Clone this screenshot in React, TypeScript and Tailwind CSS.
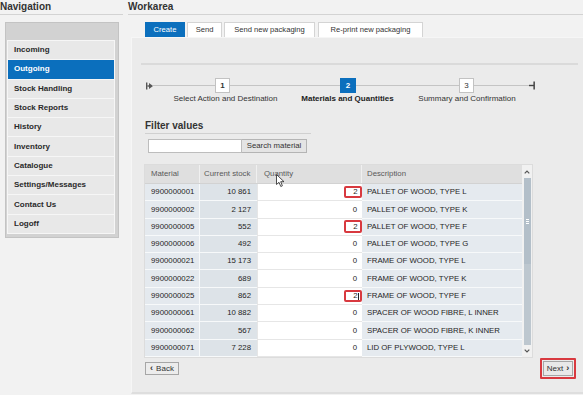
import React from "react";

const navItems = [
  "Incoming",
  "Outgoing",
  "Stock Handling",
  "Stock Reports",
  "History",
  "Inventory",
  "Catalogue",
  "Settings/Messages",
  "Contact Us",
  "Logoff",
];

type Row = { m: string; s: string; q: string; d: string; hl?: boolean; caret?: boolean };

const rows: Row[] = [
  { m: "9900000001", s: "10 861", q: "2", d: "PALLET OF WOOD, TYPE L", hl: true },
  { m: "9900000002", s: "2 127", q: "0", d: "PALLET OF WOOD, TYPE K" },
  { m: "9900000005", s: "552", q: "2", d: "PALLET OF WOOD, TYPE F", hl: true },
  { m: "9900000006", s: "492", q: "0", d: "PALLET OF WOOD, TYPE G" },
  { m: "9900000021", s: "15 173", q: "0", d: "FRAME OF WOOD, TYPE L" },
  { m: "9900000022", s: "689", q: "0", d: "FRAME OF WOOD, TYPE K" },
  { m: "9900000025", s: "862", q: "2", d: "FRAME OF WOOD, TYPE F", hl: true, caret: true },
  { m: "9900000061", s: "10 882", q: "0", d: "SPACER OF WOOD FIBRE, L INNER" },
  { m: "9900000062", s: "567", q: "0", d: "SPACER OF WOOD FIBRE, K INNER" },
  { m: "9900000071", s: "7 228", q: "0", d: "LID OF PLYWOOD, TYPE L" },
];

function StepBox({ n, active, bold }: { n: string; active?: boolean; bold?: boolean }) {
  return (
    <div
      className={
        active
          ? "w-[16px] h-[15px] shrink-0 bg-[#0b6fbd] text-white text-[8px] font-bold flex items-center justify-center leading-none"
          : `w-[15px] h-[15px] shrink-0 bg-white border border-[#c2c2c2] text-[#333] text-[8px] ${bold ? "font-bold" : ""} flex items-center justify-center leading-none`
      }
    >
      {n}
    </div>
  );
}

export default function App() {
  return (
    <div className="w-[583px] h-[395px] overflow-hidden bg-[#f2f2f2] flex font-['Liberation_Sans',Arial,sans-serif] text-[#333]">
      {/* Navigation column */}
      <div className="w-[123px] shrink-0 mr-[5px]">
        <div className="h-[15px] border-b border-[#d3d3d3] text-[10px] font-bold leading-[13px] text-[#333]">
          Navigation
        </div>
        <div className="mt-[7px] ml-[5px] w-[114px] bg-[#d2d2d2] border border-[#c3c3c3] pt-[17px] pl-[1px] pr-[3px] pb-[3px]">
          <div className="border border-[#f6f6f6] border-b-0">
            {navItems.map((it) => (
              <div
                key={it}
                className={
                  it === "Outgoing"
                    ? "h-[19.3px] bg-[#0b6fbd] text-white border-b border-[#f6f6f6] pl-[6px] text-[8px] font-bold flex items-center"
                    : "h-[19.3px] bg-[#e8e8e8] text-[#2a2a2a] border-b border-[#f6f6f6] pl-[6px] text-[8px] font-bold flex items-center"
                }
              >
                {it}
              </div>
            ))}
          </div>
        </div>
      </div>

      {/* Workarea column */}
      <div className="flex-1 flex flex-col">
        <div className="h-[15px] border-b border-[#d3d3d3] text-[10px] font-bold leading-[13px] text-[#333]">
          Workarea
        </div>
        <div className="mt-[7px] ml-[17px] flex items-end h-[15px] text-[7.6px] text-[#333]">
          <div className="w-[40px] h-[15px] bg-[#0b6fbd] text-white flex items-center justify-center">Create</div>
          <div className="ml-[2px] w-[35px] h-[15px] bg-white border border-b-0 border-[#d4d4d4] flex items-center justify-center">Send</div>
          <div className="ml-[2px] w-[91px] h-[15px] bg-white border border-b-0 border-[#d4d4d4] flex items-center justify-center">Send new packaging</div>
          <div className="ml-[3px] w-[105px] h-[15px] bg-white border border-b-0 border-[#d4d4d4] flex items-center justify-center">Re-print new packaging</div>
        </div>

        {/* Panel */}
        <div className="ml-[3px] h-[357px] bg-[#ebebeb] border-t border-l border-[#f6f6f6] border-b-2 border-b-[#dedede] flex flex-col">
          <div className="mt-[25px] ml-[9px] mr-[5px] h-[2px] bg-[#dadada]" />

          {/* Stepper */}
          <div className="mt-[13px] ml-[14px] h-[15px] flex items-center">
            <svg width="7" height="8" viewBox="0 0 7 8" className="shrink-0">
              <rect x="0" y="0.5" width="1.4" height="7" fill="#555" />
              <rect x="1.4" y="3.3" width="2" height="1.4" fill="#555" />
              <polygon points="3,1 7,4 3,7" fill="#555" />
            </svg>
            <div className="w-[62px] h-px bg-[#c4c4c4]" />
            <StepBox n="1" bold />
            <div className="w-[110px] h-px bg-[#c4c4c4]" />
            <StepBox n="2" active />
            <div className="w-[103px] h-px bg-[#c4c4c4]" />
            <StepBox n="3" />
            <div className="w-[55px] h-px bg-[#c4c4c4]" />
            <svg width="6" height="9" viewBox="0 0 6 9" className="shrink-0">
              <rect x="0" y="3.8" width="5" height="1.4" fill="#444" />
              <rect x="4.4" y="0.5" width="1.5" height="8" fill="#444" />
            </svg>
          </div>
          <div className="mt-[1px] ml-[33px] h-[10px] flex text-[8px] leading-[10px]">
            <div className="w-[121px] text-center text-[#333]">Select Action and Destination</div>
            <div className="w-[123px] text-center font-bold text-[#222]">Materials and Quantities</div>
            <div className="w-[116px] text-center text-[#333]">Summary and Confirmation</div>
          </div>

          {/* Filter values */}
          <div className="mt-[15px] ml-[13px] w-[166px] h-[15px] border-b border-[#d0d0d0] text-[10px] font-bold leading-[13px] text-[#333]">
            Filter values
          </div>
          <div className="mt-[5px] ml-[16px] flex h-[14px]">
            <div className="w-[94px] h-[14px] bg-white border border-[#bdbdbd]" />
            <div className="w-[65px] h-[14px] bg-[#e4e4e4] border border-l-0 border-[#b4b4b4] text-[7.8px] flex items-center justify-center text-[#333]">
              Search material
            </div>
          </div>

          {/* Table */}
          <div className="mt-[11px] ml-[12px] flex w-[389px] h-[194px] border border-[#dcdcdc] bg-[#f1f1f1] text-[7.8px]">
            <div className="w-[377px] flex flex-col">
              <div className="flex h-[19px] bg-[#dfdfdf] border-b border-[#d2d2d2] text-[#595959]">
                <div className="w-[55px] pl-[6px] flex items-center border-r border-[#f0f0f0]">Material</div>
                <div className="w-[57px] pl-[4px] flex items-center border-r border-[#f0f0f0]">Current stock</div>
                <div className="relative w-[105px] pl-[7px] flex items-center border-r border-[#f0f0f0]">
                  Quantity
                  <svg width="9" height="14" viewBox="0 0 9 14" className="absolute left-[19px] top-[9px]">
                    <path d="M0.5 0.5 L0.5 10.5 L3 8.3 L4.8 12.5 L6.4 11.8 L4.7 7.7 L8 7.7 Z" fill="#fff" stroke="#222" strokeWidth="0.8" strokeLinejoin="round" />
                  </svg>
                </div>
                <div className="w-[160px] pl-[5px] flex items-center">Description</div>
              </div>
              {rows.map((r) => (
                <div key={r.m} className="flex h-[17.4px] text-[#1e1e1e]">
                  <div className="w-[55px] pl-[6px] flex items-center bg-[#e4e9ee] border-b border-r border-[#f7f9fa]">{r.m}</div>
                  <div className="w-[57px] pr-[6px] flex items-center justify-end bg-[#dde3e8] border-b border-[#f7f9fa]">{r.s}</div>
                  <div className="w-[105px] flex items-center justify-end bg-white border-b border-l border-[#e6e6e6]">
                    {r.hl ? (
                      <div className="relative w-[18px] h-[12.5px] border-2 border-[#d8393f] rounded-[2px] bg-white flex items-center justify-end pr-[2.5px]">
                        {r.q}
                        {r.caret && <div className="absolute right-[1px] top-[1px] w-px h-[7px] bg-[#222]" />}
                      </div>
                    ) : (
                      <div className="pr-[5px]">{r.q}</div>
                    )}
                  </div>
                  <div className="w-[160px] pl-[5px] flex items-center bg-[#e5eaef] border-b border-[#f7f9fa]">{r.d}</div>
                </div>
              ))}
            </div>
            {/* Scrollbar */}
            <div className="w-[11px] flex flex-col items-center">
              <div className="h-[13px] flex items-center justify-center">
                <svg width="6" height="4" viewBox="0 0 6 4">
                  <path d="M0.7 3.3 L3 1 L5.3 3.3" fill="none" stroke="#555" strokeWidth="1.2" />
                </svg>
              </div>
              <div className="w-[7px] h-[86px] bg-[#b3bfc9] flex flex-col items-center justify-center gap-[1px]">
                <div className="w-[3px] h-px bg-white" />
                <div className="w-[3px] h-px bg-white" />
                <div className="w-[3px] h-px bg-white" />
              </div>
              <div className="w-[7px] h-[81px] bg-[#bdc7cf]" />
              <div className="flex-1 flex items-center justify-center">
                <svg width="6" height="4" viewBox="0 0 6 4">
                  <path d="M0.7 0.7 L3 3 L5.3 0.7" fill="none" stroke="#555" strokeWidth="1.2" />
                </svg>
              </div>
            </div>
          </div>

          {/* Buttons */}
          <div className="flex items-center justify-between h-[21px] mr-[7px]">
            <div className="ml-[13px] w-[34px] h-[13px] bg-[#ececec] border border-[#a6a6a6] text-[8px] flex items-center justify-center gap-[3px] text-[#333]">
              <span className="font-bold text-[9px] leading-none">‹</span>
              <span>Back</span>
            </div>
            <div className="w-[36px] h-[21px] border-2 border-[#d8393f] rounded-[1px] p-[1px] flex items-center justify-center">
              <div className="w-[30px] h-[15px] bg-[#e9e9e9] border border-[#a6a6a6] text-[8px] flex items-center justify-center gap-[3px] text-[#333]">
                <span>Next</span>
                <span className="font-bold text-[9px] leading-none">›</span>
              </div>
            </div>
          </div>
        </div>
      </div>
    </div>
  );
}
